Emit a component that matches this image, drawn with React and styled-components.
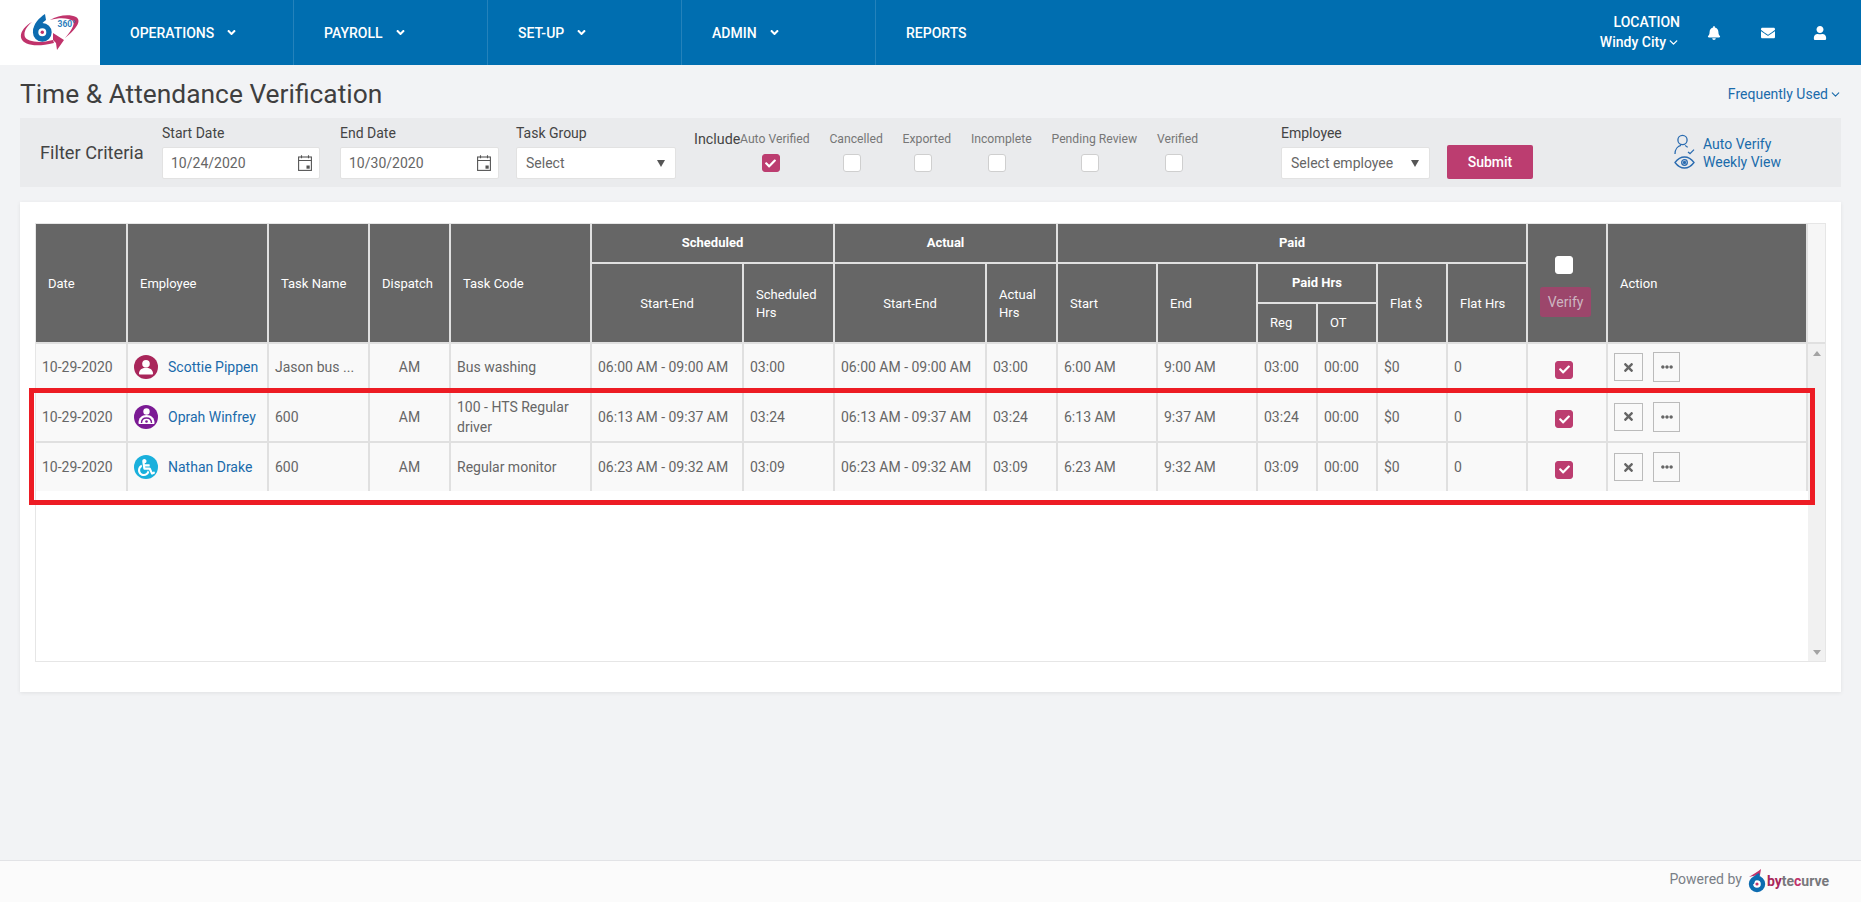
import React from 'react';
import styled, { createGlobalStyle } from 'styled-components';
import { FaAngleDown, FaBell, FaEnvelope, FaUser, FaCheck, FaTimes, FaEllipsisH, FaWheelchair } from 'react-icons/fa';
import { ChevronDown } from 'lucide-react';

const GlobalStyle = createGlobalStyle`
  * { box-sizing: border-box; }
  html, body { margin: 0; height: 100%; overflow: hidden; }
  body {
    background: #f2f3f5;
    color: #666;
    font-family: Roboto, "Liberation Sans", sans-serif;
    font-size: 14px;
  }
`;

const Page = styled.div`
  display: flex;
  flex-direction: column;
  height: 902px;
`;

const Nav = styled.header`
  display: flex;
  height: 65px;
  flex-shrink: 0;
  background: #006eb0;
  color: #fff;
`;

const LogoBox = styled.div`
  display: flex;
  align-items: flex-start;
  width: 100px;
  padding: 13px 0 0 20px;
  background: #fff;
`;

const NavItem = styled.div`
  display: flex;
  align-items: center;
  gap: 11px;
  width: 194px;
  padding-left: 30px;
  font-weight: 500;
  font-size: 14px;
  border-right: ${(p) => (p.$last ? 'none' : '1px solid rgba(255, 255, 255, 0.14)')};
  svg { font-size: 13px; }
`;

const NavRight = styled.div`
  display: flex;
  align-items: center;
  margin-left: auto;
  padding-right: 34px;
`;

const Location = styled.div`
  display: flex;
  flex-direction: column;
  align-items: flex-end;
  gap: 3px;
  margin-right: 27px;
  font-size: 14px;
  line-height: 17px;
  font-weight: 500;
  svg { vertical-align: -2px; margin-left: 1px; }
`;

const NavIcon = styled.span`
  display: flex;
  justify-content: center;
  width: 14px;
  margin-left: ${(p) => p.$gap || 0}px;
  font-size: 14px;
`;

const TitleRow = styled.div`
  display: flex;
  align-items: center;
  justify-content: space-between;
  height: 53px;
  padding: 4px 19px 0 20px;
`;

const Title = styled.h1`
  margin: 0;
  font-size: 26.35px;
  font-weight: 400;
  color: #3f3f3f;
`;

const Frequent = styled.a`
  color: #1a6bab;
  font-size: 14px;
  svg { vertical-align: -2px; margin-left: 1px; }
`;

const FilterBar = styled.section`
  display: flex;
  align-items: flex-start;
  height: 69px;
  margin: 0 20px;
  padding: 7px 0 0 20px;
  background: #eaebed;
`;

const FilterTitle = styled.div`
  width: 122px;
  margin-top: 16px;
  font-size: 18.2px;
  line-height: 24px;
  color: #444;
`;

const Field = styled.div`
  width: ${(p) => p.$w}px;
  margin-right: ${(p) => p.$mr || 0}px;
`;

const FieldLabel = styled.div`
  height: 16px;
  margin-bottom: 6px;
  font-size: 14px;
  line-height: 16px;
  color: #444;
`;

const InputBox = styled.div`
  display: flex;
  align-items: center;
  justify-content: space-between;
  height: 32px;
  padding: 0 ${(p) => p.$pr || 10}px 0 ${(p) => p.$pl || 9}px;
  background: #fff;
  border: 1px solid #e2e2e2;
  border-radius: 2px;
  font-size: 14px;
  color: #666;
`;

const Caret = styled.span`
  width: 0;
  height: 0;
  border-left: 4px solid transparent;
  border-right: 4px solid transparent;
  border-top: 7px solid #555;
`;

const IncludeLabel = styled.div`
  width: 46px;
  margin-top: 4px;
  font-size: 14.3px;
  line-height: 20px;
  color: #444;
`;

const Statuses = styled.div`
  display: flex;
  gap: 19.8px;
  width: 541px;
`;

const Status = styled.div`
  display: flex;
  flex-direction: column;
  align-items: center;
  gap: 7px;
  margin-top: 7px;
  font-size: 12.2px;
  line-height: 15px;
  color: #777;
  white-space: nowrap;
`;

const Box = styled.span`
  display: flex;
  align-items: center;
  justify-content: center;
  width: 18px;
  height: 18px;
  border-radius: 3px;
  color: #fff;
  font-size: 11px;
  background: ${(p) => (p.$on ? '#bc3d70' : '#fff')};
  border: 1px solid ${(p) => (p.$on ? '#bc3d70' : '#cfcfcf')};
`;

const StatusBox = styled(Box)`
  margin-right: 8px;
`;

const Submit = styled.button`
  width: 86px;
  height: 34px;
  margin: 20px 0 0 17px;
  padding: 0;
  border: none;
  border-radius: 2px;
  background: #bc3d70;
  color: #fff;
  font: 500 14px Roboto, "Liberation Sans", sans-serif;
`;

const QuickLinks = styled.div`
  display: flex;
  flex-direction: column;
  margin: 10px 0 0 141px;
`;

const QuickLink = styled.a`
  display: flex;
  align-items: center;
  gap: 8px;
  height: 18px;
  color: #1a6bab;
  font-size: 14px;
  svg { width: 21px; flex-shrink: 0; }
`;

const Card = styled.main`
  height: 490px;
  margin: 15px 20px 0;
  padding: 21px 15px 0;
  background: #fff;
  box-shadow: 0 1px 4px rgba(0, 0, 0, 0.08);
`;

const Frame = styled.div`
  position: relative;
  display: flex;
  width: 1791px;
  height: 439px;
  border: 1px solid #e6e6e6;
`;

const Grid = styled.table`
  width: 1772px;
  height: fit-content;
  table-layout: fixed;
  border-collapse: separate;
  border-spacing: 0;
`;

const Th = styled.th`
  height: ${(p) => (p.rowSpan ? p.rowSpan * 40 : 40)}px;
  padding: ${(p) => (p.rowSpan > 1 ? 2 : 0)}px ${(p) => (p.$center ? 2 : 12)}px 0;
  background: #666;
  color: #fff;
  font-size: 13px;
  line-height: 18px;
  font-weight: ${(p) => (p.$strong ? 700 : 400)};
  text-align: ${(p) => (p.$center ? 'center' : 'left')};
  vertical-align: middle;
  border-right: 2px solid #e0e0e0;
  border-bottom: 2px solid #e0e0e0;
`;

const VerifyHead = styled(Th)`
  padding: 6px 0 0 12px;
`;

const Td = styled.td`
  height: ${(p) => p.$h}px;
  padding: 0 6px;
  background: #f9f9f9;
  color: #666;
  font-size: 14px;
  line-height: 20px;
  text-align: ${(p) => (p.$center ? 'center' : 'left')};
  white-space: ${(p) => (p.$wrap ? 'normal' : 'nowrap')};
  border-right: 2px solid #e0e0e0;
  border-bottom: ${(p) => (p.$last ? 'none' : '2px solid #e0e0e0')};
`;

const Person = styled.div`
  display: flex;
  align-items: center;
  gap: 10px;
  color: #1a6bab;
`;

const Avatar = styled.span`
  display: flex;
  align-items: center;
  justify-content: center;
  width: 24px;
  height: 24px;
  flex-shrink: 0;
  border-radius: 50%;
  color: #fff;
  background: ${(p) => p.$color};
`;

const HeadCheck = styled(Box)`
  margin: 0 0 13px 15px;
  border-color: #fff;
`;

const VerifyButton = styled.div`
  display: flex;
  align-items: center;
  justify-content: center;
  width: 51px;
  height: 30px;
  border-radius: 3px;
  background: #9c466b;
  color: #cdb6c1;
  font-size: 14px;
  font-weight: 400;
`;

const RowCheck = styled(Box)`
  margin: 5px 0 0 21px;
`;

const Actions = styled.div`
  display: flex;
  align-items: center;
  gap: 10px;
`;

const ActionButton = styled.span`
  display: flex;
  align-items: center;
  justify-content: center;
  width: ${(p) => p.$w}px;
  height: ${(p) => p.$h}px;
  border: 1px solid #bbb;
  color: #666;
  font-size: ${(p) => p.$size}px;
`;

const Gutter = styled.div`
  display: flex;
  flex-direction: column;
  flex: 1;
`;

const GutterHead = styled.div`
  height: 120px;
  background: #f6f6f6;
  border-bottom: 2px solid #e0e0e0;
`;

const GutterTrack = styled.div`
  display: flex;
  flex: 1;
  flex-direction: column;
  justify-content: space-between;
  align-items: center;
  padding: 7px 0 6px;
  background: #f1f1f1;
`;

const Arrow = styled.span`
  width: 0;
  height: 0;
  border-left: 4px solid transparent;
  border-right: 4px solid transparent;
  border-${(p) => (p.$up ? 'bottom' : 'top')}: 5px solid #a3a3a3;
`;

const Highlight = styled.div`
  position: absolute;
  left: -7px;
  top: 164px;
  width: 1786px;
  height: 117px;
  border: 5px solid #ed1c24;
  pointer-events: none;
`;

const Footer = styled.footer`
  display: flex;
  align-items: center;
  justify-content: flex-end;
  gap: 6px;
  height: 42px;
  margin-top: auto;
  padding: 0 32px 6px 0;
  background: #fbfbfb;
  border-top: 1px solid #e2e3e6;
  color: #7a7f87;
  font-size: 14px;
`;

const Brand = styled.span`
  display: flex;
  align-items: center;
  gap: 1px;
  margin-top: 5px;
  font-size: 14px;
  font-weight: 700;
  color: #77787c;
`;

const BrandAccent = styled.span`
  color: ${(p) => p.$color};
`;

const Logo = () => (
  <svg width="60" height="38" viewBox="0 0 60 38">
    <path d="M12 9C4 13-1 21 1.500 26 4 31 14 35 34 30l-1-3C18 31 7 28 5 24 3 19 7 13 12 9z" fill="#c0336b" />
    <path d="M33 20l11 7-7 10-1-7-3-3z" fill="#c0336b" />
    <path d="M30 7C38 2 50 1 56 4c5 3 3 10-11 21 7-8 10-14 8-17-4-3-13-4-23-1z" fill="#c0336b" />
    <circle cx="22.300" cy="19.300" r="6.700" fill="#fff" stroke="#0d6cb0" strokeWidth="5.400" />
    <path d="M13 19C13 11 19 5 25 1l1 6c-3 2-6 5-7 9z" fill="#0d6cb0" />
    <circle cx="22.300" cy="19.300" r="1.700" fill="#c0336b" />
    <text x="37.500" y="14" fontFamily="Roboto, sans-serif" fontWeight="700" fontSize="8.500" fill="#2f7fbd">360°</text>
  </svg>
);

const BrandMark = () => (
  <svg width="18" height="24" viewBox="0 0 18 24">
    <path d="M1 8C5 5 10 3 13 0l-1 6C9 6 5 7 1 8z" fill="#c0336b" />
    <circle cx="9" cy="15" r="6" fill="#fff" stroke="#0d6cb0" strokeWidth="4.400" />
    <path d="M3 15C3 10 7 6 11 4l1 3c-3 1-5 4-6 8z" fill="#0d6cb0" />
    <circle cx="9" cy="15" r="1.600" fill="#c0336b" />
  </svg>
);

const CalendarIcon = () => (
  <svg width="14" height="16" viewBox="0 0 14 16" fill="none" stroke="#555" strokeWidth="1.100">
    <rect x="0.600" y="2" width="12.800" height="13.400" />
    <path d="M0.600 5.500h12.800M3.500 0.300v3M10.500 0.300v3" />
    <rect x="8.500" y="10.500" width="3.200" height="3.200" fill="#555" stroke="none" />
  </svg>
);

const VerifyUserIcon = () => (
  <svg height="21" viewBox="0 0 21 21" fill="none" stroke="#2a6bb0" strokeWidth="1.300">
    <circle cx="8.500" cy="6" r="4.600" />
    <path d="M1 20c0-5 3-8 6-8.600M11 11.500c1 .4 2 1 2.600 1.900" />
    <path d="M14 18l2 1.600 4-4" />
  </svg>
);

const EyeIcon = () => (
  <svg height="13" viewBox="0 0 21 13" fill="none" stroke="#2a6bb0" strokeWidth="1.300">
    <path d="M1 6.500C4 2.500 7 1 10.500 1S17 2.500 20 6.500C17 10.500 14 12 10.500 12S4 10.500 1 6.500z" />
    <circle cx="10.500" cy="6.500" r="2.800" />
    <circle cx="10.500" cy="6.500" r="1" fill="#2a6bb0" />
  </svg>
);

const PersonIcon = () => (
  <svg width="18" height="18" viewBox="0 0 18 18" fill="#fff">
    <circle cx="9" cy="5.800" r="3.800" />
    <path d="M2 15.500c0-3.600 2.800-5.800 7-5.800s7 2.200 7 5.800c0 .6-.4 1-1 1H3c-.6 0-1-.4-1-1z" />
  </svg>
);

const DriverIcon = () => (
  <svg width="19" height="19" viewBox="0 0 19 19" fill="#fff">
    <circle cx="9.500" cy="4.500" r="3.200" />
    <path d="M1.500 16c0-5 3-8 8-8s8 3 8 8c0 .6-.4 1-1 1h-14c-.6 0-1-.4-1-1z" />
    <path d="M4.500 16c0-3 2-5 5-5s5 2 5 5" fill="none" stroke="#7b1a94" strokeWidth="1.400" />
    <circle cx="9.500" cy="14.500" r="1.300" fill="#7b1a94" />
  </svg>
);

const columns = [92, 141, 101, 81, 141, 152, 91, 152, 71, 100, 100, 60, 60, 70, 80, 80, 200];

const rows = [
  {
    name: 'Scottie Pippen', icon: <PersonIcon />, color: '#a9265a', task: 'Jason bus ...', code: 'Bus washing',
    range: '06:00 AM - 09:00 AM', hrs: '03:00', start: '6:00 AM', end: '9:00 AM', height: 48,
  },
  {
    name: 'Oprah Winfrey', icon: <DriverIcon />, color: '#7b1a94', task: '600', code: '100 - HTS Regular driver',
    range: '06:13 AM - 09:37 AM', hrs: '03:24', start: '6:13 AM', end: '9:37 AM', height: 51,
  },
  {
    name: 'Nathan Drake', icon: <FaWheelchair size={17} />, color: '#1ab0dc', task: '600', code: 'Regular monitor',
    range: '06:23 AM - 09:32 AM', hrs: '03:09', start: '6:23 AM', end: '9:32 AM', height: 48, last: true,
  },
];

const statuses = [
  { label: 'Auto Verified', on: true },
  { label: 'Cancelled' },
  { label: 'Exported' },
  { label: 'Incomplete' },
  { label: 'Pending Review' },
  { label: 'Verified' },
];

function App() {
  return (
    <Page>
      <GlobalStyle />
      <Nav>
        <LogoBox><Logo /></LogoBox>
        <NavItem>OPERATIONS <FaAngleDown /></NavItem>
        <NavItem>PAYROLL <FaAngleDown /></NavItem>
        <NavItem>SET-UP <FaAngleDown /></NavItem>
        <NavItem>ADMIN <FaAngleDown /></NavItem>
        <NavItem $last>REPORTS</NavItem>
        <NavRight>
          <Location>
            <span>LOCATION</span>
            <span>Windy City<ChevronDown size={13} strokeWidth={2.5} /></span>
          </Location>
          <NavIcon><FaBell /></NavIcon>
          <NavIcon $gap={40}><FaEnvelope /></NavIcon>
          <NavIcon $gap={38}><FaUser /></NavIcon>
        </NavRight>
      </Nav>

      <TitleRow>
        <Title>Time &amp; Attendance Verification</Title>
        <Frequent>Frequently Used<ChevronDown size={13} strokeWidth={2} /></Frequent>
      </TitleRow>

      <FilterBar>
        <FilterTitle>Filter Criteria</FilterTitle>
        <Field $w={158} $mr={20}>
          <FieldLabel>Start Date</FieldLabel>
          <InputBox $pl={8} $pr={7}>10/24/2020<CalendarIcon /></InputBox>
        </Field>
        <Field $w={159} $mr={17}>
          <FieldLabel>End Date</FieldLabel>
          <InputBox $pl={8} $pr={7}>10/30/2020<CalendarIcon /></InputBox>
        </Field>
        <Field $w={160} $mr={18}>
          <FieldLabel>Task Group</FieldLabel>
          <InputBox>Select<Caret /></InputBox>
        </Field>
        <IncludeLabel>Include</IncludeLabel>
        <Statuses>
          {statuses.map((s) => (
            <Status key={s.label}>
              {s.label}
              <StatusBox $on={s.on}>{s.on && <FaCheck />}</StatusBox>
            </Status>
          ))}
        </Statuses>
        <Field $w={149}>
          <FieldLabel>Employee</FieldLabel>
          <InputBox>Select employee<Caret /></InputBox>
        </Field>
        <Submit>Submit</Submit>
        <QuickLinks>
          <QuickLink><VerifyUserIcon />Auto Verify</QuickLink>
          <QuickLink><EyeIcon />Weekly View</QuickLink>
        </QuickLinks>
      </FilterBar>

      <Card>
        <Frame>
          <Grid>
            <colgroup>
              {columns.map((w, i) => <col key={i} width={w} />)}
            </colgroup>
            <thead>
              <tr>
                <Th rowSpan={3}>Date</Th>
                <Th rowSpan={3}>Employee</Th>
                <Th rowSpan={3}>Task Name</Th>
                <Th rowSpan={3}>Dispatch</Th>
                <Th rowSpan={3}>Task Code</Th>
                <Th colSpan={2} $center $strong>Scheduled</Th>
                <Th colSpan={2} $center $strong>Actual</Th>
                <Th colSpan={6} $center $strong>Paid</Th>
                <VerifyHead rowSpan={3}>
                  <HeadCheck />
                  <VerifyButton>Verify</VerifyButton>
                </VerifyHead>
                <Th rowSpan={3}>Action</Th>
              </tr>
              <tr>
                <Th rowSpan={2} $center>Start-End</Th>
                <Th rowSpan={2}>Scheduled Hrs</Th>
                <Th rowSpan={2} $center>Start-End</Th>
                <Th rowSpan={2}>Actual Hrs</Th>
                <Th rowSpan={2}>Start</Th>
                <Th rowSpan={2}>End</Th>
                <Th colSpan={2} $center $strong>Paid Hrs</Th>
                <Th rowSpan={2}>Flat $</Th>
                <Th rowSpan={2}>Flat Hrs</Th>
              </tr>
              <tr>
                <Th>Reg</Th>
                <Th>OT</Th>
              </tr>
            </thead>
            <tbody>
              {rows.map((r) => (
                <tr key={r.name}>
                  <Td $h={r.height} $last={r.last}>10-29-2020</Td>
                  <Td $h={r.height} $last={r.last}>
                    <Person><Avatar $color={r.color}>{r.icon}</Avatar>{r.name}</Person>
                  </Td>
                  <Td $h={r.height} $last={r.last}>{r.task}</Td>
                  <Td $h={r.height} $last={r.last} $center>AM</Td>
                  <Td $h={r.height} $last={r.last} $wrap>{r.code}</Td>
                  <Td $h={r.height} $last={r.last}>{r.range}</Td>
                  <Td $h={r.height} $last={r.last}>{r.hrs}</Td>
                  <Td $h={r.height} $last={r.last}>{r.range}</Td>
                  <Td $h={r.height} $last={r.last}>{r.hrs}</Td>
                  <Td $h={r.height} $last={r.last}>{r.start}</Td>
                  <Td $h={r.height} $last={r.last}>{r.end}</Td>
                  <Td $h={r.height} $last={r.last}>{r.hrs}</Td>
                  <Td $h={r.height} $last={r.last}>00:00</Td>
                  <Td $h={r.height} $last={r.last}>$0</Td>
                  <Td $h={r.height} $last={r.last}>0</Td>
                  <Td $h={r.height} $last={r.last}>
                    <RowCheck $on><FaCheck /></RowCheck>
                  </Td>
                  <Td $h={r.height} $last={r.last}>
                    <Actions>
                      <ActionButton $w={29} $h={28} $size={13}><FaTimes /></ActionButton>
                      <ActionButton $w={27} $h={30} $size={12}><FaEllipsisH /></ActionButton>
                    </Actions>
                  </Td>
                </tr>
              ))}
            </tbody>
          </Grid>
          <Gutter>
            <GutterHead />
            <GutterTrack>
              <Arrow $up />
              <Arrow />
            </GutterTrack>
          </Gutter>
          <Highlight />
        </Frame>
      </Card>

      <Footer>
        Powered by
        <Brand>
          <BrandMark />
          <span>
            <BrandAccent $color="#a9265a">by</BrandAccent>te<BrandAccent $color="#c0336b">c</BrandAccent>urve
          </span>
        </Brand>
      </Footer>
    </Page>
  );
}

export default App;
